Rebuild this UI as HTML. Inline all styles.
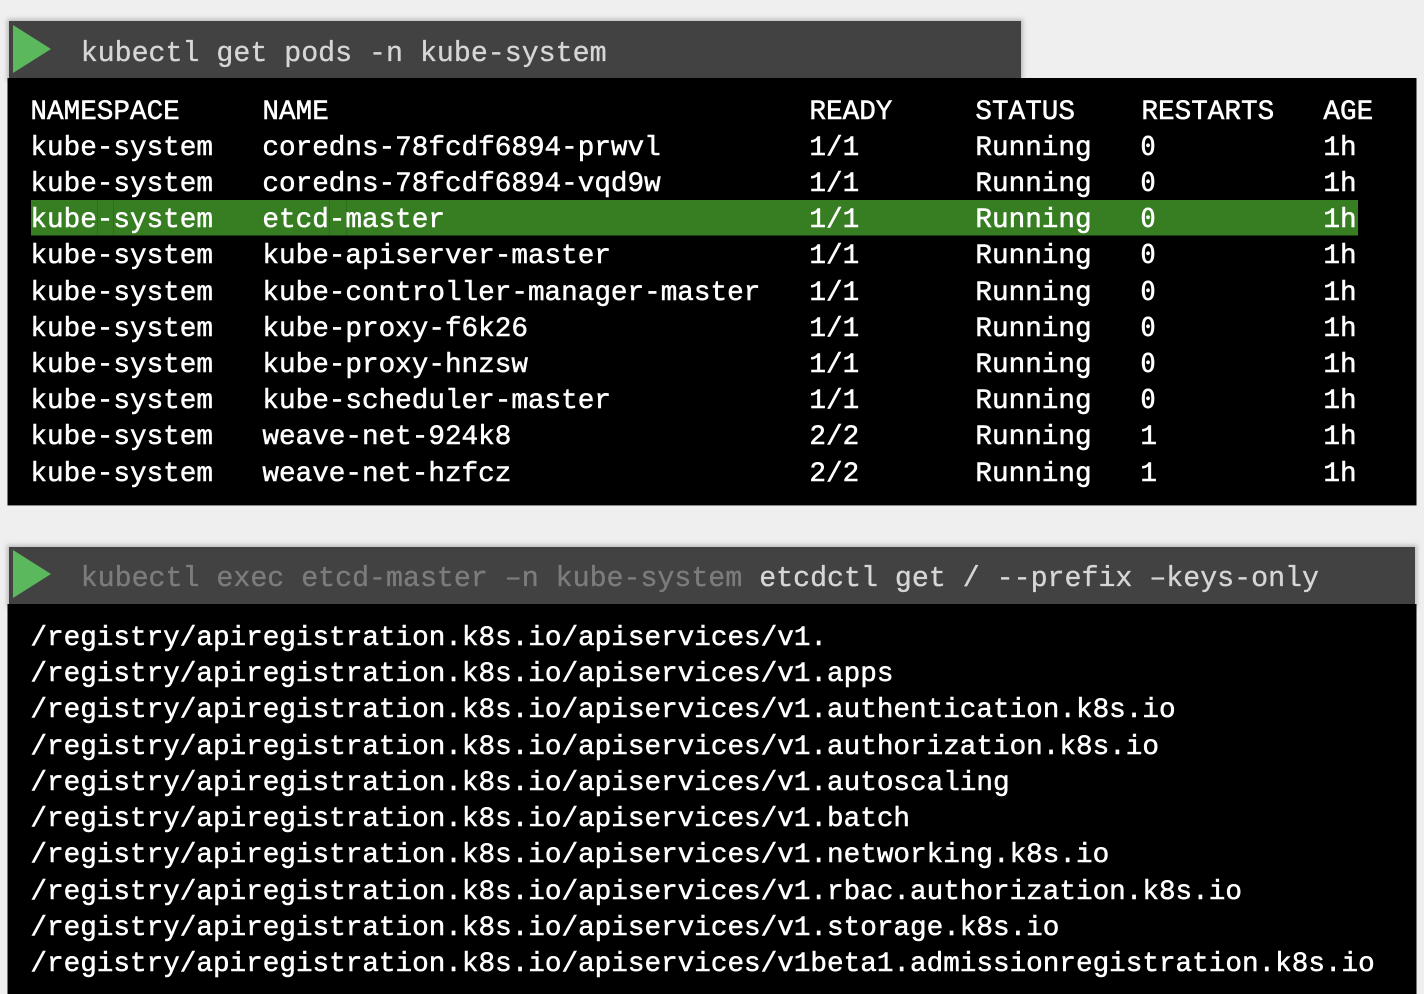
<!DOCTYPE html>
<html>
<head>
<meta charset="utf-8">
<style>
html,body{margin:0;padding:0;background:#efefef;}
body{width:1424px;height:994px;overflow:hidden;position:relative;}
svg{position:absolute;left:0;top:0;}
text{font-family:"Liberation Mono",monospace;white-space:pre;}
.t text{font-size:27.67px;fill:#fff;stroke:#fff;stroke-width:.5px;}
.t text.z{font-family:"DejaVu Sans Mono",monospace;font-size:25.5px;}
.h text{font-size:28.28px;fill:#d6d6d6;stroke:#d6d6d6;stroke-width:.35px;}
.h .d{fill:#7c7c7c;stroke:#7c7c7c;}
</style>
</head>
<body>
<svg width="1424" height="994" viewBox="0 0 1424 994" xmlns="http://www.w3.org/2000/svg">
<defs>
<filter id="s" x="-2%" y="-10%" width="104%" height="120%"><feGaussianBlur stdDeviation="2"/></filter>
</defs>
<rect x="7" y="19" width="1016" height="62" fill="#bbb" filter="url(#s)"/>
<rect x="7" y="545" width="1410" height="62" fill="#bbb" filter="url(#s)"/>
<rect x="9" y="21" width="1012" height="57" fill="#424242"/>
<rect x="9" y="547" width="1406" height="57" fill="#424242"/>
<rect x="7.5" y="78" width="1409" height="427" fill="#000"/>
<rect x="7.5" y="505" width="1409" height="1" fill="#888"/>
<rect x="7.5" y="604" width="1409" height="390" fill="#000"/>
<polygon points="13,25 51,49 13,73" fill="#5cb85c"/>
<polygon points="13,550 51,574 13,598" fill="#5cb85c"/>
<rect x="31" y="200" width="1327" height="35.5" fill="#377e22"/>
<g fill="#2f6f1c">
<rect x="97" y="200" width="1" height="35.5"/>
<rect x="113" y="200" width="1" height="35.5"/>
<rect x="329" y="200" width="1" height="35.5"/>
<rect x="346" y="200" width="1" height="35.5"/>
</g>
<g class="h" transform="translate(-0.3,-1)">
<text x="81" y="62">kubectl get pods -n kube-system</text>
<text x="81" y="587"><tspan class="d">kubectl exec etcd-master –n kube-system </tspan>etcdctl get / --prefix –keys-only</text>
</g>
<g class="t" transform="translate(-0.6,-1)">
<text x="31" y="120">NAMESPACE</text><text x="263" y="120">NAME</text><text x="810" y="120">READY</text><text x="976" y="120">STATUS</text><text x="1142" y="120">RESTARTS</text><text x="1324" y="120">AGE</text>
<text x="31" y="156">kube-system</text><text x="263" y="156">coredns-78fcdf6894-prwvl</text><text x="810" y="156">1/1</text><text x="976" y="156">Running</text><text class="z" x="1141" y="156">0</text><text x="1324" y="156">1h</text>
<text x="31" y="192">kube-system</text><text x="263" y="192">coredns-78fcdf6894-vqd9w</text><text x="810" y="192">1/1</text><text x="976" y="192">Running</text><text class="z" x="1141" y="192">0</text><text x="1324" y="192">1h</text>
<text x="31" y="228">kube-system</text><text x="263" y="228">etcd-master</text><text x="810" y="228">1/1</text><text x="976" y="228">Running</text><text class="z" x="1141" y="228">0</text><text x="1324" y="228">1h</text>
<text x="31" y="264">kube-system</text><text x="263" y="264">kube-apiserver-master</text><text x="810" y="264">1/1</text><text x="976" y="264">Running</text><text class="z" x="1141" y="264">0</text><text x="1324" y="264">1h</text>
<text x="31" y="301">kube-system</text><text x="263" y="301">kube-controller-manager-master</text><text x="810" y="301">1/1</text><text x="976" y="301">Running</text><text class="z" x="1141" y="301">0</text><text x="1324" y="301">1h</text>
<text x="31" y="337">kube-system</text><text x="263" y="337">kube-proxy-f6k26</text><text x="810" y="337">1/1</text><text x="976" y="337">Running</text><text class="z" x="1141" y="337">0</text><text x="1324" y="337">1h</text>
<text x="31" y="373">kube-system</text><text x="263" y="373">kube-proxy-hnzsw</text><text x="810" y="373">1/1</text><text x="976" y="373">Running</text><text class="z" x="1141" y="373">0</text><text x="1324" y="373">1h</text>
<text x="31" y="409">kube-system</text><text x="263" y="409">kube-scheduler-master</text><text x="810" y="409">1/1</text><text x="976" y="409">Running</text><text class="z" x="1141" y="409">0</text><text x="1324" y="409">1h</text>
<text x="31" y="445">kube-system</text><text x="263" y="445">weave-net-924k8</text><text x="810" y="445">2/2</text><text x="976" y="445">Running</text><text x="1141" y="445">1</text><text x="1324" y="445">1h</text>
<text x="31" y="482">kube-system</text><text x="263" y="482">weave-net-hzfcz</text><text x="810" y="482">2/2</text><text x="976" y="482">Running</text><text x="1141" y="482">1</text><text x="1324" y="482">1h</text>
<text x="31" y="646">/registry/apiregistration.k8s.io/apiservices/v1.</text>
<text x="31" y="682">/registry/apiregistration.k8s.io/apiservices/v1.apps</text>
<text x="31" y="718">/registry/apiregistration.k8s.io/apiservices/v1.authentication.k8s.io</text>
<text x="31" y="755">/registry/apiregistration.k8s.io/apiservices/v1.authorization.k8s.io</text>
<text x="31" y="791">/registry/apiregistration.k8s.io/apiservices/v1.autoscaling</text>
<text x="31" y="827">/registry/apiregistration.k8s.io/apiservices/v1.batch</text>
<text x="31" y="863">/registry/apiregistration.k8s.io/apiservices/v1.networking.k8s.io</text>
<text x="31" y="900">/registry/apiregistration.k8s.io/apiservices/v1.rbac.authorization.k8s.io</text>
<text x="31" y="936">/registry/apiregistration.k8s.io/apiservices/v1.storage.k8s.io</text>
<text x="31" y="972">/registry/apiregistration.k8s.io/apiservices/v1beta1.admissionregistration.k8s.io</text>
</g>
</svg>
</body>
</html>
